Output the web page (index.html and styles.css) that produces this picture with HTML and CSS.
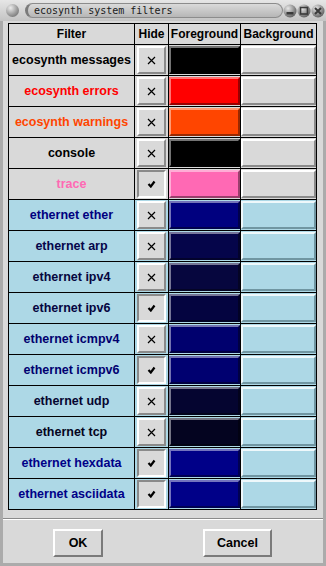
FILE: index.html
```html
<!DOCTYPE html>
<html lang="en">
<head>
  <meta charset="UTF-8">
  <meta name="viewport" content="width=device-width, initial-scale=1.0">
  <title>ecosynth system filters</title>
  <link rel="stylesheet" href="styles.css">
</head>
<body>

  <div class="window">
    <div class="titlebar">
      <span class="orb"></span>
      <div class="title">ecosynth system filters</div>
      <div class="controls">
        <svg width="42" height="14" viewBox="0 0 42 14">
          <defs>
            <radialGradient id="knob" cx="0.35" cy="0.3" r="0.75">
              <stop offset="0" stop-color="#e8e8e8"/>
              <stop offset="0.55" stop-color="#9a9a9a"/>
              <stop offset="1" stop-color="#5c5c5c"/>
            </radialGradient>
          </defs>
          <circle cx="7" cy="7" r="6.5" fill="url(#knob)"/>
          <rect x="3.5" y="8" width="7" height="2.5" fill="#3a3a3a"/>
          <circle cx="21" cy="7" r="6.5" fill="url(#knob)"/>
          <rect x="17.5" y="3.5" width="7" height="6.5" fill="none" stroke="#3a3a3a" stroke-width="1.6"/>
          <circle cx="35" cy="7" r="6.5" fill="url(#knob)"/>
          <path d="M32 4 L38 10 M38 4 L32 10" stroke="#3a3a3a" stroke-width="2"/>
        </svg>
      </div>
    </div>

    <div class="content">
      <div class="filters" id="filters">
        <div class="head">Filter</div>
        <div class="head">Hide</div>
        <div class="head">Foreground</div>
        <div class="head">Background</div>
      </div>
    </div>

    <div class="separator"></div>

    <div class="actions">
      <button type="button" class="ok">OK</button>
      <button type="button" class="cancel">Cancel</button>
    </div>
  </div>

  <script>
    // name, foreground, hidden, ethernet row
    const filters = [
      ["ecosynth messages", "#000000", false, false],
      ["ecosynth errors", "#ff0000", false, false],
      ["ecosynth warnings", "#ff4500", false, false],
      ["console", "#000000", false, false],
      ["trace", "#ff69b4", true, false],
      ["ethernet ether", "#00007f", false, true],
      ["ethernet arp", "#05054a", false, true],
      ["ethernet ipv4", "#06063e", false, true],
      ["ethernet ipv6", "#040440", true, true],
      ["ethernet icmpv4", "#00006e", false, true],
      ["ethernet icmpv6", "#000070", true, true],
      ["ethernet udp", "#050530", false, true],
      ["ethernet tcp", "#040420", false, true],
      ["ethernet hexdata", "#000088", true, true],
      ["ethernet asciidata", "#000088", true, true]
    ];

    const crossIcon = '<svg width="9" height="9" viewBox="0 0 9 9"><path d="M1 1 L8 8 M8 1 L1 8" stroke="#000" stroke-width="1.2"/></svg>';
    const checkIcon = '<svg width="9" height="8" viewBox="0 0 9 8"><path d="M1.5 4 L3.8 6.5 L7.5 1.5" fill="none" stroke="#000" stroke-width="2.2"/></svg>';

    const grid = document.getElementById("filters");
    let html = "";
    filters.forEach(function (f) {
      const rowClass = f[3] ? "blue" : "gray";
      html += `
        <div class="name ${rowClass}" style="color: ${f[1]}">${f[0]}</div>
        <div class="cell ${rowClass} hide"><button type="button" class="toggle ${f[2] ? "on" : ""}">${f[2] ? checkIcon : crossIcon}</button></div>
        <div class="cell ${rowClass} fg"><button type="button" class="swatch" style="--c: ${f[1]}"></button></div>
        <div class="cell ${rowClass} bg"><button type="button" class="swatch plain"></button></div>
      `;
    });
    grid.insertAdjacentHTML("beforeend", html);
  </script>

</body>
</html>
```

FILE: styles.css
```css
* {
  box-sizing: border-box;
}

body {
  margin: 0;
  background-color: #d9d9d9;
  font-family: "Liberation Sans", Arial, sans-serif;
}

.window {
  width: 326px;
  height: 566px;
  display: flex;
  flex-direction: column;
  background-color: #d9d9d9;
  border: 3px solid #ababab;
  border-top: none;
}

/* title bar */
.titlebar {
  height: 21px;
  margin: 0 -3px;
  padding: 0 1px 0 6px;
  display: flex;
  align-items: center;
  background: linear-gradient(#e6e6e6, #c4c4c4);
}

.orb {
  width: 13px;
  height: 13px;
  border-radius: 50%;
  background: radial-gradient(circle at 35% 30%, #ececec, #9a9a9a 55%, #5a5a5a);
}

.title {
  width: 258px;
  height: 15px;
  margin-left: 6px;
  padding-left: 6px;
  border: 1px solid #8c8c8c;
  border-left: 3px solid #7a7a7a;
  border-radius: 8px;
  background: linear-gradient(#dadada, #b6b6b6);
  font-family: "DejaVu Sans Mono", "Liberation Mono", monospace;
  font-size: 10px;
  line-height: 13px;
  color: #1a1a1a;
}

.controls {
  width: 42px;
  height: 14px;
  display: flex;
}

/* filter table */
.content {
  padding: 2px 6px 0 5px;
}

.filters {
  display: grid;
  grid-template-columns: 125px 33px 71px 75px;
  grid-template-rows: 20px;
  grid-auto-rows: 30px;
  gap: 1px;
  padding: 1px;
  background-color: #000;
}

.head,
.name {
  display: flex;
  align-items: center;
  justify-content: center;
  font-size: 12.5px;
  font-weight: bold;
  white-space: nowrap;
}

.head {
  font-size: 12px;
  background-color: #d9d9d9;
  color: #000;
}

.gray {
  background-color: #d9d9d9;
}

.blue {
  background-color: #add8e6;
}

.cell {
  padding: 1px 0;
}

.cell.hide {
  padding: 1px 2px;
}

button {
  margin: 0;
  padding: 0;
  font-family: inherit;
  cursor: pointer;
}

.toggle {
  width: 100%;
  height: 100%;
  display: flex;
  align-items: center;
  justify-content: center;
  background-color: #d9d9d9;
  border: 2px solid;
  border-color: #fff #8a8a8a #8a8a8a #fff;
}

.toggle.on {
  border-color: #8a8a8a #fff #fff #8a8a8a;
}

.swatch {
  display: block;
  width: 100%;
  height: 100%;
  background-color: var(--c);
  border: 2px solid;
  border-color: color-mix(in srgb, var(--c) 55%, white) color-mix(in srgb, var(--c) 60%, black) color-mix(in srgb, var(--c) 60%, black) color-mix(in srgb, var(--c) 55%, white);
}

.gray .swatch.plain {
  --c: #d9d9d9;
  border-color: #fff #8a8a8a #8a8a8a #fff;
}

.blue .swatch.plain {
  --c: #add8e6;
  border-color: #eef8fb #7096a2 #7096a2 #eef8fb;
}

/* bottom buttons */
.separator {
  height: 2px;
  margin-top: 8px;
  border-top: 1px solid #8a8a8a;
  border-bottom: 1px solid #fff;
}

.actions {
  display: flex;
  justify-content: space-around;
  padding: 9px 1px 0 0;
}

.actions button {
  height: 28px;
  background-color: #d9d9d9;
  border: 2px solid;
  border-color: #fff #7a7a7a #7a7a7a #fff;
  font-size: 12.5px;
  font-weight: bold;
  color: #000;
}

.ok {
  width: 50px;
}

.cancel {
  width: 69px;
}
```
